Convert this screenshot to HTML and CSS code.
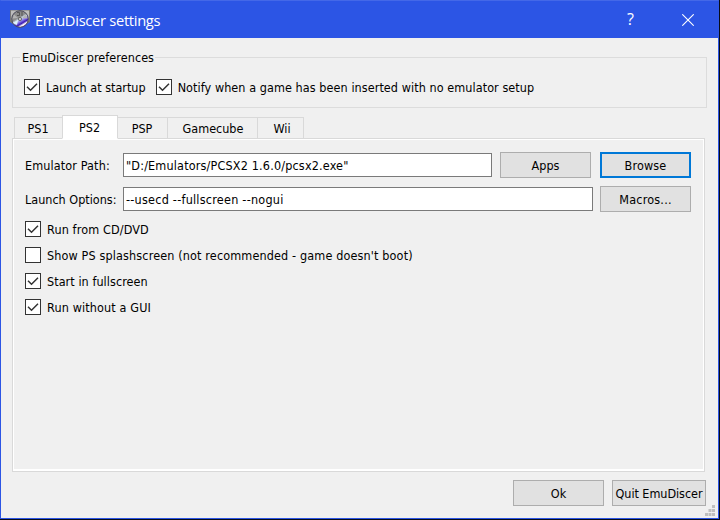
FILE: index.html
```html
<!DOCTYPE html>
<html lang="en">
<head>
<meta charset="utf-8">
<title>EmuDiscer settings</title>
<link rel="stylesheet" href="styles.css">
</head>
<body>
<svg width="0" height="0" class="defs"><symbol id="tick" viewBox="0 0 14 14"><path d="M2 6.700 5.500 10.200 12 3.700" fill="none" stroke="#333" stroke-width="1.5"/></symbol>
<linearGradient id="disc" x1=".2" y1="0" x2=".8" y2="1"><stop offset=".4" stop-color="#8b8b8b"/><stop offset=".5" stop-color="#c9d9ee"/><stop offset=".62" stop-color="#8c7be8"/><stop offset=".74" stop-color="#3a18b8"/><stop offset=".84" stop-color="#fff"/><stop offset=".95" stop-color="#c060e0"/></linearGradient></svg>
<div class="window">
  <header class="titlebar">
    <svg class="logo" width="20" height="18" viewBox="0 0 20 18">
      <path d="M0 0h20v12l-3 2H3l-3-2z" fill="#777"/>
      <path d="M1 .5h18v10H1z" fill="#bdbdbd"/>
      <circle cx="10" cy="9" r="8.300" fill="url(#disc)" stroke="#484858"/>
      <path d="M2.500 8.500 4 4.500 8 8zM17.500 8.500 16 4.500 12 8z" fill="#b4b4b4"/>
      <path d="M3 13l5-3-1 5z" fill="#dff4fa"/>
      <path d="M7 2.500h2.500v3H7M12 2v4" fill="none" stroke="#555"/>
      <circle cx="10" cy="9" r="1.600" fill="#ccc" stroke="#555" stroke-width=".8"/>
    </svg>
    <h1>EmuDiscer settings</h1>
    <span class="help">?</span>
    <svg class="close" width="12" height="12" viewBox="0 0 12 12"><path d="M.3.3 11.700 11.700M11.700.3.3 11.700" stroke="#fff" stroke-width="1.1"/></svg>
  </header>
  <main>
    <fieldset class="prefs">
      <legend>EmuDiscer preferences</legend>
      <label class="check"><i class="box"><svg><use href="#tick"/></svg></i><span class="t-launch">Launch at startup</span></label>
      <label class="check"><i class="box"><svg><use href="#tick"/></svg></i><span class="t-notify">Notify when a game has been inserted with no emulator setup</span></label>
    </fieldset>
    <nav class="tabs">
      <div class="tab ps1">PS1</div><div class="tab ps2">PS2</div><div class="tab psp">PSP</div><div class="tab gc">Gamecube</div><div class="tab wii">Wii</div>
    </nav>
    <section class="pane">
      <div class="row"><span class="name">Emulator Path:</span><div class="field"><span class="v1">"D:/Emulators/PCSX2 1.6.0/pcsx2.exe"</span></div><div class="btn">Apps</div><div class="btn focus">Browse</div></div>
      <div class="row"><span class="name options-name">Launch Options:</span><div class="field wide"><span class="v2">--usecd --fullscreen --nogui</span></div><div class="btn macros">Macros...</div></div>
      <div class="options">
        <label class="check"><i class="box"><svg><use href="#tick"/></svg></i><span class="o1">Run from CD/DVD</span></label>
        <label class="check"><i class="box"></i><span class="o2">Show PS splashscreen (not recommended - game doesn't boot)</span></label>
        <label class="check"><i class="box"><svg><use href="#tick"/></svg></i><span class="o3">Start in fullscreen</span></label>
        <label class="check"><i class="box"><svg><use href="#tick"/></svg></i><span class="o4">Run without a GUI</span></label>
      </div>
    </section>
    <footer><div class="btn">Ok</div><div class="btn quit">Quit EmuDiscer</div></footer>
  </main>
  <svg class="grip" width="10" height="11" viewBox="0 0 10 11"><path d="M7 0h3v3H7zM3.500 4h3v3h-3zM7 4h3v3H7zM0 8h3v3H0zM3.500 8h3v3h-3zM7 8h3v3H7z" fill="#bfbfbf"/></svg>
</div>
</body>
</html>
```
FILE: styles.css
```css
* { box-sizing: border-box; }
body {
  margin: 0;
  background: #080c18;
  color: #000;
  font: 12.5px/16px "DejaVu Sans Condensed", "DejaVu Sans", sans-serif;
  font-stretch: condensed;
  white-space: nowrap;
}
.defs { position: absolute; }
.window {
  position: relative;
  width: 719px;
  height: 519px;
  background: #f0f0f0;
  border: 1px solid #2c55e5;
  border-top-color: #4468e8;
}
.titlebar {
  height: 37px;
  display: flex;
  align-items: center;
  padding: 0 24px 0 9px;
  background: #2c55e5;
  color: #fff;
}
.logo { margin-top: -2px; }
h1 {
  margin: 0 auto 0 5px;
  font: 14.7px/20px "Open Sans", "Noto Sans", sans-serif;
  letter-spacing: -0.3px;
}
.help { font: 16px/20px "Open Sans", sans-serif; margin: -1px 48px 0 0; }
main { padding: 10px 11px 0; }
.prefs {
  margin: 0;
  padding: 0 0 0 11px;
  border: 1px solid #dcdcdc;
  width: 695px;
  height: 60px;
  display: flex;
  gap: 10px;
}
.prefs legend { margin-left: -4px; padding: 0 1px 0 2px; height: 18px; line-height: 20px; letter-spacing: 0.06px; }
.prefs .check { margin-top: 13px; }
.check { display: flex; align-items: center; gap: 6px; height: 16px; }
.check span { display: block; padding-top: 1px; }
.box { width: 16px; height: 16px; border: 1px solid #333; background: #fff; flex: none; }
.box svg { display: block; width: 14px; height: 14px; }
.t-notify { letter-spacing: 0.07px; }
.tabs { display: flex; align-items: flex-end; height: 24px; margin: 7px 0 -1px 2px; position: relative; }
.tab {
  height: 22px;
  line-height: 22px;
  text-align: center;
  border: 1px solid #d9d9d9;
  border-left: 0;
}
.tab.ps1 { width: 48px; padding-right: 1px; border-left: 1px solid #d9d9d9; border-right: 0; }
.tab.ps2 { width: 56px; height: 24px; line-height: 24px; padding-right: 1px; background: #fff; border-left: 1px solid #d9d9d9; border-bottom-color: #fff; }
.tab.psp { width: 50px; padding-right: 1px; }
.tab.gc { width: 90px; padding-left: 1px; }
.tab.wii { width: 46px; padding-left: 3px; }
.pane {
  width: 693px;
  height: 334px;
  border: 1px solid #d9d9d9;
  box-shadow: inset 0 0 0 1px #fff, inset 0 -2px #fff;
  padding: 13px 12px 0;
}
.row { display: flex; align-items: center; height: 26px; margin-bottom: 8px; }
.name { width: 98px; padding-top: 2px; letter-spacing: 0.12px; }
.options-name { letter-spacing: 0; }
.field { width: 369px; height: 24px; line-height: 24px; padding-left: 2px; border: 1px solid #7a7a7a; background: #fff; margin-right: 8px; }
.field.wide { width: 470px; margin-right: 7px; }
.v1 { letter-spacing: 0.17px; }
.v2 { letter-spacing: 0.24px; }
.btn {
  width: 91px;
  height: 26px;
  line-height: 25px;
  text-align: center;
  background: #e1e1e1;
  border: 1px solid #adadad;
}
.btn + .btn { margin-left: 9px; }
.btn.focus { border: 2px solid #0078d7; line-height: 23px; letter-spacing: 0.15px; }
.btn.macros { letter-spacing: 0.2px; }
.options { display: flex; flex-direction: column; gap: 10px; padding-top: 1px; }
.o1 { letter-spacing: 0.13px; }
.o2 { letter-spacing: 0.14px; }
.o3 { letter-spacing: 0.06px; }
.o4 { letter-spacing: 0.14px; }
footer { display: flex; justify-content: flex-end; padding: 8px 1px 0 0; }
footer .btn.quit { width: 94px; margin-left: 8px; letter-spacing: -0.05px; }
.grip { position: absolute; right: 3px; bottom: 2px; }
```
